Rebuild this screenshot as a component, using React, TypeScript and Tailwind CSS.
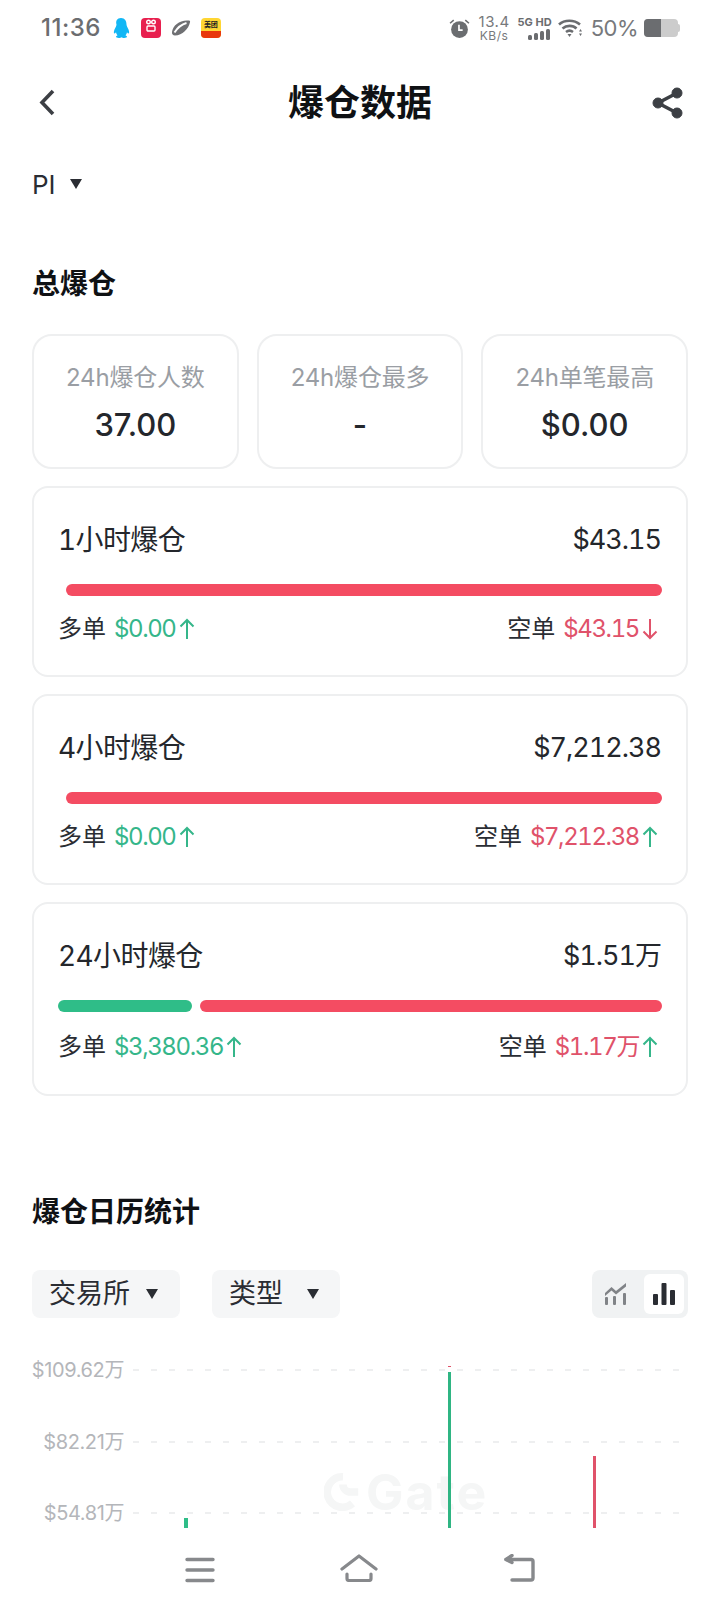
import { ReactNode } from "react";

const GREEN = "text-[#35b68a]";
const RED = "text-[#e0526a]";

function Arrow({ className }: { className: string }) {
  // thin arrow used next to the amounts, rotates for the down state
  return (
    <svg viewBox="0 0 16 22" className={`w-4 h-[22px] ${className}`} fill="none" stroke="currentColor" strokeWidth="2">
      <path d="M8 21V2M1.5 8.5 8 2l6.5 6.5" />
    </svg>
  );
}

function Caret({ className = "" }: { className?: string }) {
  return (
    <svg viewBox="0 0 12 10" className={`w-3 h-[10px] text-[#2a2d33] ${className}`} fill="currentColor">
      <path d="M0 0h12L6 10z" />
    </svg>
  );
}

function StatCard({ label, value }: { label: string; value: string }) {
  return (
    <div className="flex-1 h-[135px] rounded-[20px] border-2 border-[#eeeff0] flex flex-col items-center pt-[24px]">
      <div className="text-[24px] leading-[36px] tracking-[-0.2px] text-[#9a9ea4]">{label}</div>
      <div className="mt-[8px] text-[31px] leading-[42px] font-medium text-[#24272c]">{value}</div>
    </div>
  );
}

function Amount({ label, value, tone, arrow, down }: { label: string; value: string; tone: string; arrow: string; down?: boolean }) {
  return (
    <div className="flex items-center text-[24px] leading-[32px]">
      <span className="text-[#2a2d33]">{label}</span>
      <span className={`ml-2 tracking-[-1.4px] ${tone}`}>{value}</span>
      <Arrow className={`ml-[3px] ${arrow} ${down ? "rotate-180" : ""}`} />
    </div>
  );
}

function LiqCard({
  title,
  total,
  bar,
  longVal,
  shortVal,
  shortArrow,
  shortDown,
  tall,
}: {
  title: string;
  total: string;
  bar: ReactNode;
  longVal: string;
  shortVal: string;
  shortArrow: string;
  shortDown?: boolean;
  tall?: boolean;
}) {
  return (
    <div className={`rounded-[16px] border-2 border-[#eeeff0] px-6 pt-[30px] ${tall ? "pb-[31px]" : "pb-[30px]"}`}>
      <div className="flex items-center justify-between h-[44px] text-[28px] text-[#24272c] [font-feature-settings:'tnum']">
        <span className="tracking-[-0.6px]">{title}</span>
        <span className="text-[27px] tracking-[-1px] mr-[1px]">{total}</span>
      </div>
      <div className="mt-[22px] flex gap-2 h-3">{bar}</div>
      <div className={`flex items-center justify-between pr-[4px] [font-feature-settings:'tnum'] ${tall ? "mt-[19px]" : "mt-[17px]"}`}>
        <Amount label="多单" value={longVal} tone={GREEN} arrow={GREEN} />
        <Amount label="空单" value={shortVal} tone={RED} arrow={shortArrow} down={shortDown} />
      </div>
    </div>
  );
}

function StatusBar() {
  return (
    <div className="h-[56px] flex items-center justify-between pl-[41px] pr-[40px] text-[#6b6d70]">
      <div className="flex items-center">
        <span className="text-[24px] font-medium tracking-[0.5px]">11:36</span>
        <svg viewBox="0 0 18 20" className="ml-[11px] w-[18px] h-5" fill="#12b7f5">
          <path d="M9 0c4 0 5.5 3 5.5 6.5 0 1.5 1 2.5 2 5 1 2.500.8 4-.2 4-.5 0-1-.8-1.300-1.200-.2 1.200-.7 2.200-1.500 2.900.9.500 1.500 1 1.500 1.600 0 .700-1.200 1.200-2.800 1.200-1.200 0-2.200-.3-2.700-.7-.5.4-1.500.7-2.700.7-1.600 0-2.800-.5-2.800-1.200 0-.6.6-1.100 1.500-1.600-.8-.7-1.300-1.700-1.500-2.900-.3.4-.8 1.200-1.300 1.200-1 0-1.200-1.500-.2-4s2-3.500 2-5C3.500 3 5 0 9 0z" />
        </svg>
        <div className="ml-[11px] w-5 h-5 rounded-[4px] bg-[#e8204f] flex flex-col items-center justify-start overflow-hidden">
          <svg viewBox="0 0 12 13" className="w-[12px] h-[13px] mt-[1px]" fill="none" stroke="#fff" strokeWidth="1.400">
            <circle cx="3.500" cy="3" r="1.800" />
            <circle cx="8.500" cy="3" r="1.800" />
            <rect x="2" y="7" width="8" height="5" rx="1" />
          </svg>
        </div>
        <svg viewBox="0 0 20 20" className="ml-[10px] w-5 h-5">
          <path d="M1 14C2 7 9 1.500 18 2.500c1 .2 1.300.8 1 1.800C17.500 11 11.500 17.500 4 17.500c-2 0-3.300-1.500-3-3.500z" fill="#6f7073" />
          <path d="M3.500 14.500C7 9 10 6.500 15.500 5" stroke="#fff" strokeWidth="2" fill="none" />
        </svg>
        <div className="ml-[10px] w-5 h-5 rounded-[4px] bg-[#ffd633] overflow-hidden flex flex-col items-center">
          <span className="text-[7px] leading-[13px] font-bold text-[#222]">美团</span>
          <div className="w-5 flex-1 bg-[#e8380d]" />
        </div>
      </div>
      <div className="flex items-center">
        <svg viewBox="0 0 20 20" className="w-[21px] h-[21px]" fill="#6b6d70">
          <circle cx="10" cy="11" r="8" />
          <path d="M1 5 4.500 2M19 5l-3.500-3" stroke="#6b6d70" strokeWidth="1.500" />
          <path d="M9.500 6.500V11.500H13" stroke="#fff" strokeWidth="1.600" fill="none" />
        </svg>
        <div className="ml-[9px] flex flex-col items-center text-[#77797c]">
          <span className="text-[15px] leading-[16px] tracking-[0.5px]">13.4</span>
          <span className="text-[12px] leading-[12px] tracking-[0.5px]">KB/s</span>
        </div>
        <div className="ml-[8px] flex flex-col items-end">
          <span className="text-[11px] leading-[12px] font-bold whitespace-nowrap">5G HD</span>
          <svg viewBox="0 0 24 12" className="w-6 h-3" fill="#6b6d70">
            <rect x="0" y="7" width="4" height="5" rx="1.500" />
            <rect x="6" y="5" width="4" height="7" rx="1.500" />
            <rect x="12" y="3" width="4" height="9" rx="1.500" />
            <rect x="18" y="1" width="4" height="11" rx="1.500" />
          </svg>
        </div>
        <svg viewBox="0 0 25 20" className="ml-[6px] w-[25px] h-5" fill="none" stroke="#6b6d70" strokeWidth="2.600">
          <path d="M1 6.500C6.500 1.500 16 1.500 22 6.500M4.500 10.500c4-3.500 10.500-3.500 14 0M8 14c2-1.500 5-1.500 7 0" />
          <path d="M9.500 16h4L11.500 19z" fill="#6b6d70" stroke="none" />
          <path d="M21 13.500h3L22.500 11zM21 15.500h3L22.500 18z" fill="#6b6d70" stroke="none" />
        </svg>
        <span className="ml-2 text-[22px] tracking-[-0.5px] text-[#77797c]">50%</span>
        <div className="ml-[6px] flex items-center">
          <div className="flex w-[34px] h-[18px] rounded-[4px] overflow-hidden bg-[#cccccc]">
            <div className="w-[17px] bg-[#6b6d70]" />
          </div>
          <div className="w-[2px] h-2 bg-[#cccccc] rounded-r" />
        </div>
      </div>
    </div>
  );
}

function Chart() {
  const rows = [
    { label: "$109.62万", line: "mt-[40px]" },
    { label: "$82.21万", line: "mt-[48px]" },
    { label: "$54.81万", line: "mt-[47px]" },
  ];
  return (
    <div className="relative h-[210px] overflow-hidden">
      {rows.map((r) => (
        <div key={r.label} className={`flex items-center h-6 ${r.line}`}>
          <span className="w-[124px] text-right text-[20px] tracking-[-0.4px] text-[#b4b6ba] whitespace-nowrap">{r.label}</span>
          <svg className="ml-[9px] h-[2px] w-[547px]" viewBox="0 0 547 2">
            <line x1="0" y1="1" x2="547" y2="1" stroke="#eeeff0" strokeWidth="2" strokeDasharray="6 12" />
          </svg>
        </div>
      ))}
      {/* watermark + bars sit on the free chart canvas */}
      <div className="absolute left-[324px] top-[149px] flex items-center text-[50px] leading-[50px] font-bold tracking-[2px] text-[#f5f6f6]">
        <svg viewBox="0 0 40 40" className="w-[38px] h-[38px]" fill="none" stroke="#f5f6f6" strokeWidth="8">
          <path d="M30 32A16 16 0 1 1 20 4" />
          <path d="M20 12a8 8 0 0 0 8 8h8" />
        </svg>
        <span className="ml-[4px]">Gate</span>
      </div>
      <div className="absolute left-[184px] top-[200px] w-1 h-[10px] bg-[#2fbd88]" />
      <div className="absolute left-[448px] top-[48px] w-[3px] h-[1px] bg-[#e0526a]" />
      <div className="absolute left-[448px] top-[54px] w-[3px] h-[156px] bg-[#2fb583]" />
      <div className="absolute left-[593px] top-[138px] w-[3px] h-[72px] bg-[#e0526a]" />
    </div>
  );
}

function Drop({ label, className, caret }: { label: string; className: string; caret: string }) {
  return (
    <div className={`h-12 rounded-[8px] bg-[#f5f6f7] flex items-center text-[27px] text-[#2a2d33] ${className}`}>
      <span>{label}</span>
      <Caret className={caret} />
    </div>
  );
}

export default function App() {
  return (
    <div className="relative w-[720px] h-[1612px] overflow-hidden bg-white [font-family:Inter,'Noto_Sans_CJK_SC',sans-serif]">
      <StatusBar />

      <div className="h-[94px] px-[36px] flex items-center justify-between">
        <div className="w-8 h-8 flex items-center">
          <svg viewBox="0 0 20 28" className="w-5 h-7 ml-[2px]" fill="none" stroke="#3c3f44" strokeWidth="3.600">
            <path d="M15 2 4 13.500 15 25" />
          </svg>
        </div>
        <span className="text-[36px] font-bold text-[#0f1114]">爆仓数据</span>
        <svg viewBox="0 0 32 32" className="w-8 h-8" fill="#3c3f44" stroke="#3c3f44">
          <circle cx="25" cy="6" r="5" />
          <circle cx="25" cy="26" r="5" />
          <circle cx="6" cy="16" r="5" />
          <path d="M25 6 6 16l19 10" fill="none" strokeWidth="3.500" />
        </svg>
      </div>

      <div className="mt-[18px] px-8 flex items-center h-8 text-[26px] text-[#2a2d33]">
        <span>PI</span>
        <Caret className="ml-[14px]" />
      </div>

      <div className="mt-[64px] px-8 h-10 flex items-center text-[28px] font-bold text-[#0f1114]">总爆仓</div>

      <div className="mt-[30px] px-8 flex flex-col gap-[17px]">
        <div className="flex gap-[18px]">
          <StatCard label="24h爆仓人数" value="37.00" />
          <StatCard label="24h爆仓最多" value="-" />
          <StatCard label="24h单笔最高" value="$0.00" />
        </div>
        <LiqCard
          title="1小时爆仓"
          total="$43.15"
          bar={<div className="ml-2 flex-1 rounded-full bg-[#f44c62]" />}
          longVal="$0.00"
          shortVal="$43.15"
          shortArrow={RED}
          shortDown
        />
        <LiqCard
          title="4小时爆仓"
          total="$7,212.38"
          bar={<div className="ml-2 flex-1 rounded-full bg-[#f44c62]" />}
          longVal="$0.00"
          shortVal="$7,212.38"
          shortArrow={GREEN}
        />
        <LiqCard
          title="24小时爆仓"
          total="$1.51万"
          bar={
            <>
              <div className="w-[134px] rounded-full bg-[#2fbd88]" />
              <div className="flex-1 rounded-full bg-[#f44c62]" />
            </>
          }
          longVal="$3,380.36"
          shortVal="$1.17万"
          shortArrow={GREEN}
          tall
        />
      </div>

      <div className="mt-[96px] px-8 h-10 flex items-center text-[28px] font-bold text-[#0f1114]">爆仓日历统计</div>

      <div className="mt-[38px] px-8 flex items-center">
        <Drop label="交易所" className="w-[148px] pl-[17px]" caret="ml-[16px]" />
        <Drop label="类型" className="ml-8 w-[128px] pl-[17px]" caret="ml-[24px]" />
        <div className="ml-auto w-24 h-12 rounded-[8px] bg-[#f0f2f3] flex items-center pl-[12px] pr-1">
          <svg viewBox="0 0 24 24" className="w-6 h-6" fill="#808387">
            <path d="M1 11 7.500 5l4.500 4L22 1v3.500L12 12.500 7.500 8.500 1 14z" />
            <rect x="1" y="15" width="3" height="8" rx="1" />
            <rect x="9" y="14" width="3" height="9" rx="1" />
            <rect x="19" y="11" width="3" height="12" rx="1" />
          </svg>
          <div className="ml-auto w-10 h-10 rounded-[6px] bg-white flex items-center justify-center">
            <svg viewBox="0 0 22 22" className="w-[22px] h-[22px]" fill="#2a2d33">
              <rect x="0" y="11" width="5" height="11" rx="1" />
              <rect x="8.500" y="0" width="5" height="22" rx="1" />
              <rect x="17" y="7" width="5" height="15" rx="1" />
            </svg>
          </div>
        </div>
      </div>

      <Chart />

      {/* system nav bar lies over the chart */}
      <div className="absolute left-0 right-0 bottom-0 h-[84px] bg-white flex justify-center gap-[125px] pt-[28px]">
        <svg viewBox="0 0 30 26" className="w-[30px] h-[26px] mt-[1px]" fill="none" stroke="#87898c" strokeWidth="3.400" strokeLinecap="round">
          <path d="M2 2.500h26M2 13h26M2 23.500h26" />
        </svg>
        <svg viewBox="0 0 38 28" className="w-[38px] h-7 -mt-[2px]" fill="none" stroke="#87898c" strokeWidth="3.200" strokeLinecap="round" strokeLinejoin="round">
          <path d="M2 15 19 2l17 13" />
          <path d="M7 20v4.500a2 2 0 0 0 2 2h20a2 2 0 0 0 2-2V20" />
        </svg>
        <svg viewBox="0 0 32 28" className="w-8 h-7 -mt-[2px]" fill="none" stroke="#87898c" strokeWidth="3.400" strokeLinecap="round" strokeLinejoin="round">
          <path d="M3 5.500h25a2 2 0 0 1 2 2V24a2 2 0 0 1-2 2H9" />
          <path d="M9 1.500 3 5.500l6 3" />
        </svg>
      </div>
    </div>
  );
}
